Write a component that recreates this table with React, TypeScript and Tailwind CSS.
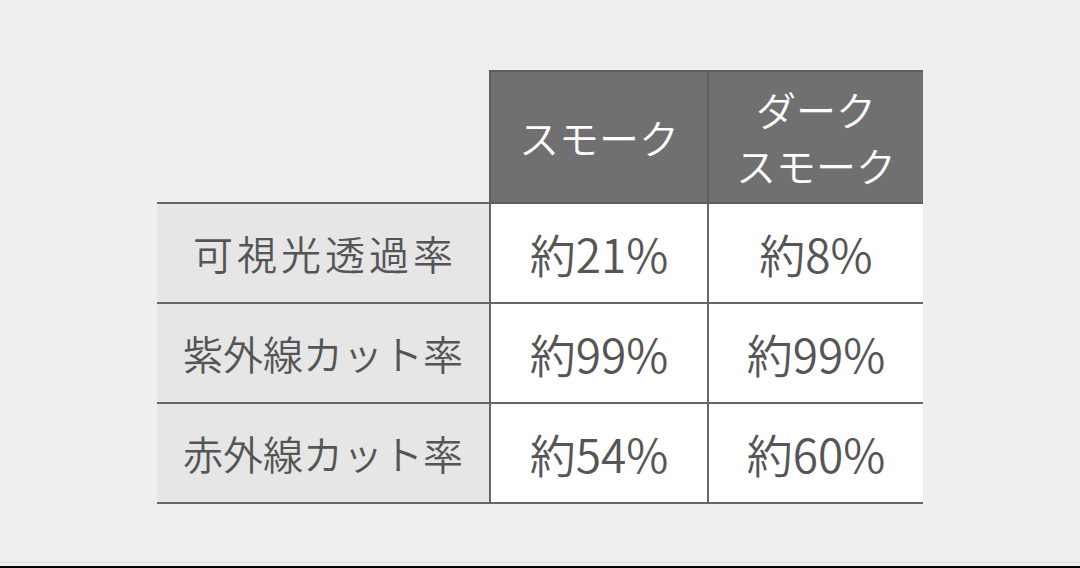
import React from "react";

type Row = {
  label: string;
  smoke: string;
  dark: string;
  wide?: boolean;
};

const rows: Row[] = [
  { label: "可視光透過率", smoke: "約21%", dark: "約8%", wide: true },
  { label: "紫外線カット率", smoke: "約99%", dark: "約99%" },
  { label: "赤外線カット率", smoke: "約54%", dark: "約60%" },
];

const font = { fontFamily: '"Noto Sans CJK JP", "Noto Sans", sans-serif' };

const App: React.FC = () => {
  return (
    <div
      className="w-[1080px] h-[568px] bg-[#efefef] flex flex-col font-[350]"
      style={font}
    >
      <div className="flex-1 pt-[70px] pl-[157px]">
        <div className="grid grid-cols-[332px_218px_216px] w-[766px]">
          {/* header */}
          <div className="h-[134px] border-b-2 border-[#666]" />
          <div className="h-[134px] bg-[#707070] border-t-2 border-l-2 border-b-2 border-[#5f5f5f] flex items-center justify-center text-white text-[40px] leading-[54px] text-center">
            スモーク
          </div>
          <div className="h-[134px] bg-[#707070] border-t-2 border-l-2 border-b-2 border-[#5f5f5f] flex items-center justify-center text-white text-[40px] leading-[56px] text-center">
            <span>
              ダーク
              <br />
              スモーク
            </span>
          </div>

          {rows.map((row) => (
            <React.Fragment key={row.label}>
              <div
                className={
                  row.wide
                    ? "h-[100px] bg-[#e6e6e6] border-b-2 border-[#666] flex items-center justify-center text-[#555] text-[40px] tracking-[4px] pl-[4px]"
                    : "h-[100px] bg-[#e6e6e6] border-b-2 border-[#666] flex items-center justify-center text-[#555] text-[40px]"
                }
              >
                {row.label}
              </div>
              <div className="h-[100px] bg-white border-l-2 border-b-2 border-[#666] flex items-center justify-center text-[#555] text-[46px]">
                {row.smoke}
              </div>
              <div className="h-[100px] bg-white border-l-2 border-b-2 border-[#666] flex items-center justify-center text-[#555] text-[46px]">
                {row.dark}
              </div>
            </React.Fragment>
          ))}
        </div>
      </div>
      <div className="h-[2px] bg-[#e2e2e2] mb-[3px]" />
      <div className="h-[2px] bg-black" />
    </div>
  );
};

export default App;
